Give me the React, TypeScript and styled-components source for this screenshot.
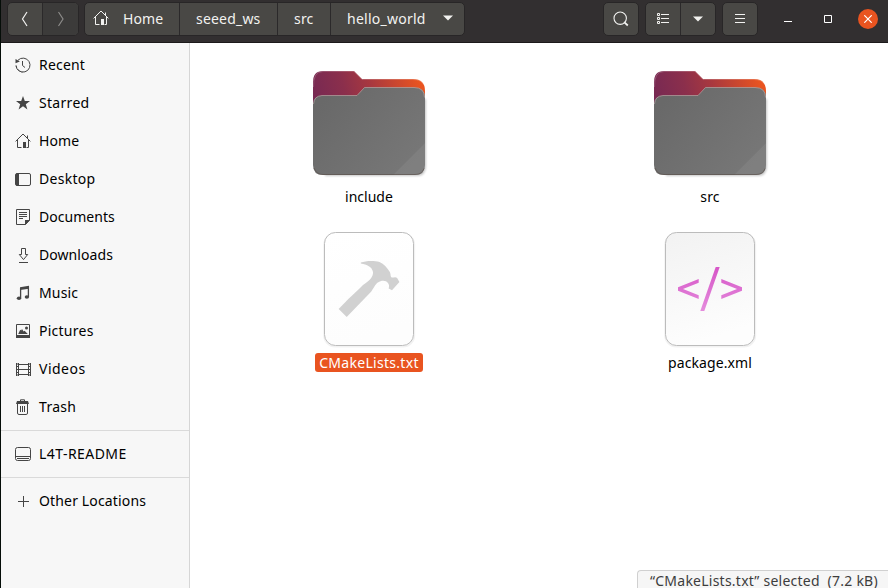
import React from 'react';
import styled, { createGlobalStyle, css } from 'styled-components';

const GlobalStyle = createGlobalStyle`
  *, *::before, *::after { box-sizing: border-box; }
  html, body { margin: 0; padding: 0; overflow: hidden; }
  body { font-family: "Noto Sans", "Open Sans", sans-serif; font-size: 14px; color: #000; }
  button { font: inherit; padding: 0; margin: 0; color: inherit; }
  svg { display: block; flex: none; }
`;

const Window = styled.div`
  position: relative;
  display: flex;
  flex-direction: column;
  width: 888px;
  height: 588px;
  overflow: hidden;
  background: #fff;
  border-left: 1px solid #050d08;
`;

const HeaderBar = styled.header`
  display: flex;
  align-items: flex-start;
  flex: none;
  height: 43px;
  padding: 2px 10px 0 6px;
  background: #322f30;
  border-bottom: 1px solid #1c1a1b;
  color: #f2f2f0;
`;

const ButtonGroup = styled.div<{ $gap?: number }>`
  display: flex;
  flex: none;
  height: 34px;
  margin-left: ${(p) => p.$gap ?? 0}px;
  border: 1px solid #282627;
  border-radius: 5px;
  overflow: hidden;
  background: #494845;
`;

const BarButton = styled.button<{ $width: number; $dim?: boolean }>`
  display: flex;
  align-items: center;
  justify-content: center;
  width: ${(p) => p.$width}px;
  border: 0;
  background: ${(p) => (p.$dim ? '#3c3b3a' : 'transparent')};
  color: ${(p) => (p.$dim ? '#8b8a88' : '#f2f2f0')};
  & + & { border-left: 1px solid #2b292a; }
`;

const Text = styled.span<{ $track?: number }>`
  white-space: pre;
  letter-spacing: ${(p) => p.$track ?? 0}px;
`;

const Crumb = styled(BarButton)<{ $pad: number }>`
  justify-content: flex-start;
  padding: 0 0 2px ${(p) => p.$pad}px;
`;

const Spacer = styled.div<{ $size: number }>`
  flex: none;
  width: ${(p) => p.$size}px;
`;

const WindowControls = styled.div`
  display: flex;
  align-items: center;
  height: 34px;
  margin-left: auto;
  gap: 20px;
`;

const ControlButton = styled.button<{ $close?: boolean }>`
  display: flex;
  align-items: center;
  justify-content: center;
  width: 20px;
  height: 20px;
  border: 0;
  border-radius: 50%;
  color: #fff;
  background: ${(p) => (p.$close ? '#e95420' : 'transparent')};
`;

const Body = styled.div`
  display: flex;
  flex: 1;
  min-height: 0;
`;

const Sidebar = styled.nav`
  flex: none;
  width: 189px;
  padding-top: 3px;
  background: #f7f7f7;
  border-right: 1px solid #d6d6d6;
`;

const Place = styled.div`
  display: flex;
  align-items: center;
  height: 38px;
  padding: 0 0 0 14px;
  gap: 8px;
  color: #454545;
  ${Text} { color: #000; line-height: 18px; margin-bottom: 1px; }
`;

const Divider = styled.div`
  height: 1px;
  margin: 4px 0;
  background: #dadada;
`;

const FileGrid = styled.main`
  display: grid;
  grid-template-columns: 340px 340px;
  grid-auto-rows: 147px;
  gap: 19px 1px;
  align-content: start;
  padding: 16px 8px 0 9px;
`;

const FileItem = styled.div`
  display: flex;
  flex-direction: column;
  align-items: center;
`;

const FileName = styled.div<{ $selected?: boolean }>`
  height: 19px;
  padding: 0 4px;
  line-height: 20px;
  border-radius: 3px;
  ${(p) => p.$selected && css`background: #e95420; color: #fff;`}
`;

const StatusBar = styled.div`
  position: absolute;
  right: 0;
  bottom: 0;
  width: 251px;
  height: 18px;
  padding-left: 12px;
  line-height: 20px;
  border: 1px solid #d0d0d0;
  border-width: 1px 0 0 1px;
  border-top-left-radius: 4px;
  background: #f6f6f6;
  color: #3d3d3d;
`;

const iconProps = { width: 16, height: 16, viewBox: '0 0 16 16', fill: 'none', stroke: 'currentColor', strokeWidth: 1 };

const HomeIcon = () => (
  <svg {...iconProps}>
    <path d="M.6 8.4 8 1l7.4 7.4M2.5 7v7.5h4M13.5 6.8v7.7h-2M12.5 2.5v3" />
    <path d="M8 9h3v6H8z" fill="currentColor" stroke="none" />
  </svg>
);

const icons: Record<string, React.ReactNode> = {
  recent: (
    <svg {...iconProps}>
      <path d="M3 3.2A7 7 0 1 1 1 8.3" />
      <path d="M1.2 9.2A7 7 0 0 0 8 15" strokeDasharray="2 1" />
      <path d="M.5 2v4.2l4.4-1.6z" fill="currentColor" stroke="none" />
      <path d="M7.5 4v4.5l2.5 2" />
    </svg>
  ),
  starred: (
    <svg {...iconProps}>
      <path fill="currentColor" stroke="none" d="m8 1 1.8 5H15l-4.2 3.2 1.6 5.3L8 11.3l-4.4 3.2 1.6-5.3L1 6h5.2z" />
    </svg>
  ),
  home: <HomeIcon />,
  desktop: (
    <svg {...iconProps}>
      <rect x=".5" y="2.5" width="15" height="12" rx="1.5" />
      <path d="M1 2.5h3v12H1z" fill="currentColor" stroke="none" />
    </svg>
  ),
  documents: (
    <svg {...iconProps}>
      <path d="M1.5.5h13v10.8l-4 4.2h-9z" />
      <path d="M4 3.5h8M4 5.5h8M4 7.5h8M4 9.5h4" />
      <path d="M10 11h5l-5 5z" fill="currentColor" stroke="none" />
    </svg>
  ),
  downloads: (
    <svg {...iconProps}>
      <path d="M6.5 1.5h4v6h2.2L8.5 12.6 4.3 7.5h2.2zM4 15.5h9" />
    </svg>
  ),
  music: (
    <svg {...iconProps}>
      <path d="M5.6 13V3M13.4 12V1.5" strokeWidth="1.3" />
      <path d="M5 2.2 14 .8v3L5 5.1z" fill="currentColor" stroke="none" />
      <ellipse cx="4" cy="13.2" rx="2.2" ry="1.8" fill="currentColor" stroke="none" />
      <ellipse cx="11.9" cy="12" rx="2.2" ry="1.8" fill="currentColor" stroke="none" />
    </svg>
  ),
  pictures: (
    <svg {...iconProps}>
      <path d="M1.5 1.5h13v12h-13z" />
      <path d="M1 12h14v3H1z" fill="currentColor" stroke="none" />
      <path d="m3.2 11 2-4.2 1 .8L7 6l1.6 2.5 1-.7L12.8 11z" fill="currentColor" stroke="none" />
      <circle cx="11.5" cy="5" r="1.5" fill="currentColor" stroke="none" />
    </svg>
  ),
  videos: (
    <svg {...iconProps}>
      <path d="M3.5 2v13M13.5 2v13M3 3.5h11M3 8.5h11M3 13.5h11" />
      <path d="M1.5 2v13M15.5 2v13" />
      <path d="M1 3h3M1 5.5h3M1 8.5h3M1 11.5h3M1 14h3M13 3h3M13 5.5h3M13 8.5h3M13 11.5h3M13 14h3" />
    </svg>
  ),
  trash: (
    <svg {...iconProps}>
      <path d="M2.5 5v9q0 1.5 1.5 1.5h7.2q1.3 0 1.3-1.5V5M5.5 7v6M7.5 7v6M9.5 7v6M5.5 2V.8h4V2" />
      <path d="M2 2h11l1 3H1z" fill="currentColor" stroke="none" />
    </svg>
  ),
  drive: (
    <svg {...iconProps}>
      <rect x=".5" y="1.5" width="15" height="13" rx="2" />
      <path d="M1 10.5h14M2 12.5h12" />
    </svg>
  ),
  plus: (
    <svg {...iconProps}>
      <path d="M8.5 3v11M3 8.5h11" />
    </svg>
  ),
};

const FolderIcon = ({ id }: { id: string }) => (
  <svg width="128" height="128" viewBox="0 0 128 128">
    <defs>
      <linearGradient id={`${id}-back`} x1="8" y1="38" x2="112" y2="12" gradientUnits="userSpaceOnUse">
        <stop offset="0" stopColor="#772953" />
        <stop offset=".3" stopColor="#8b2f4c" />
        <stop offset=".55" stopColor="#a8383f" />
        <stop offset="1" stopColor="#e95420" />
      </linearGradient>
      <linearGradient id={`${id}-front`} x1="20" y1="40" x2="110" y2="115" gradientUnits="userSpaceOnUse">
        <stop offset="0" stopColor="#696969" />
        <stop offset="1" stopColor="#787878" />
      </linearGradient>
      <filter id={`${id}-soft`} x="-10%" y="-10%" width="120%" height="120%">
        <feGaussianBlur stdDeviation="1.3" />
      </filter>
    </defs>
    <path d="M12 40h109v67q0 10-9 10H20z" fill="#000" opacity=".22" filter={`url(#${id}-soft)`} />
    <path d="M8 23Q8 12 18 12h31l8 8h51q12 0 12 12v70H8z" fill={`url(#${id}-back)`} />
    <path d="M8.5 28Q8 12.5 18 12.5h31l8 8h51q8 0 10.5 5" fill="none" stroke="#fff" opacity=".18" />
    <path d="M8 45q0-8 9-8.500h35l7.500-8H109q11 0 11 10V106q0 10-10 10H18Q8 116 8 106z" fill={`url(#${id}-front)`} />
    <path d="M120 84v22q0 10-10 10H88z" fill="#fff" opacity=".06" />
    <path d="M8.500 45q.5-8 8.500-8.500h35l7.500-8H109q10.500 0 10.500 10" fill="none" stroke="#b8a9a6" strokeWidth=".9" opacity=".75" />
    <path d="M9 109q2.500 6.500 9 6.500h92q7 0 9-6" fill="none" stroke="#5a4e48" strokeWidth="1" opacity=".6" />
  </svg>
);

const Sheet = ({ id, top, children }: { id: string; top: string; children: React.ReactNode }) => (
  <svg width="128" height="128" viewBox="0 0 128 128">
    <defs>
      <linearGradient id={id} x1="0" y1="0" x2=".25" y2="1">
        <stop offset="0" stopColor={top} />
        <stop offset="1" stopColor="#fdfdfd" />
      </linearGradient>
      <linearGradient id={`${id}-pink`} x1="0" y1="45" x2="0" y2="85" gradientUnits="userSpaceOnUse">
        <stop offset="0" stopColor="#d758c8" />
        <stop offset="1" stopColor="#e48bdc" />
      </linearGradient>
    </defs>
    <rect x="19.2" y="8.7" width="90" height="112.800" rx="11" fill="none" stroke="#000" strokeWidth="2" opacity=".05" />
    <rect x="19.5" y="7.5" width="89" height="113" rx="11" fill={`url(#${id})`} stroke="#bcbcbc" />
    {children}
  </svg>
);

const HammerFile = () => (
  <Sheet id="sheet-cmake" top="#fff">
    <path
      fill="#d1d1d1"
      d="M55.800 37.600C61 35.600 69 35.500 74.500 37 79 38.800 82 43 84.500 46.500 86.300 49 84.800 51.700 87 52.600 89 52.600 91 51.700 92.300 53.200L94.400 57 87 65.300 83.700 63.400C85.500 58 80.500 54.500 75.500 56.300 70.500 57.800 69.500 62 66.300 66.500L41.700 92 33.700 84C43 74 50 68 58 60 64 56 68.500 52 68 47 67 42 62 39.500 55.800 38.600z"
    />
  </Sheet>
);

const CodeFile = () => (
  <Sheet id="sheet-xml" top="#f2f2f2">
    <g fill="url(#sheet-xml-pink)">
      <path d="M52.700 54v3.700L37 64l15.700 6.300V74L32 65.700v-3.400z" />
      <path d="M75.300 54v3.700L91 64l-15.700 6.300V74L96 65.700v-3.400z" />
      <path d="M69.700 42h4L58.300 86h-4z" />
    </g>
  </Sheet>
);

type PlaceEntry = { icon: string; name: string; track?: number };

const places: PlaceEntry[] = [
  { icon: 'recent', name: 'Recent', track: 0.2 },
  { icon: 'starred', name: 'Starred', track: 0.3 },
  { icon: 'home', name: 'Home', track: 0.1 },
  { icon: 'desktop', name: 'Desktop', track: 0.3 },
  { icon: 'documents', name: 'Documents', track: 0.03 },
  { icon: 'downloads', name: 'Downloads', track: 0.07 },
  { icon: 'music', name: 'Music', track: 0.15 },
  { icon: 'pictures', name: 'Pictures', track: 0.25 },
  { icon: 'videos', name: 'Videos', track: 0.5 },
  { icon: 'trash', name: 'Trash', track: 0.3 },
];

const CaretIcon = () => (
  <svg width="10" height="6" viewBox="0 0 10 6">
    <path d="M0 .5h10L5 5.5z" fill="currentColor" />
  </svg>
);

const PlaceRow = ({ icon, name, track }: PlaceEntry) => (
  <Place>
    {icons[icon]}
    <Text $track={track}>{name}</Text>
  </Place>
);

export default function App() {
  return (
    <>
      <GlobalStyle />
      <Window>
        <HeaderBar>
          <ButtonGroup>
            <BarButton $width={34}>
              <svg width="8" height="16" viewBox="0 0 8 16"><path d="M6 1 1.500 8 6 15" fill="none" stroke="currentColor" strokeWidth="1.2" /></svg>
            </BarButton>
            <BarButton $width={36} $dim>
              <svg width="8" height="16" viewBox="0 0 8 16"><path d="M1.500 1 6 8l-4.500 7" fill="none" stroke="currentColor" strokeWidth="1.2" /></svg>
            </BarButton>
          </ButtonGroup>
          <ButtonGroup $gap={5}>
            <Crumb $width={94} $pad={8}>
              <HomeIcon />
              <Spacer $size={14} />
              <Text $track={0.1}>Home</Text>
            </Crumb>
            <Crumb $width={98} $pad={16}><Text $track={0.2}>seeed_ws</Text></Crumb>
            <Crumb $width={53} $pad={16}><Text $track={0.2}>src</Text></Crumb>
            <Crumb $width={134} $pad={16}>
              <Text $track={0.25}>hello_world</Text>
              <Spacer $size={17} />
              <CaretIcon />
            </Crumb>
          </ButtonGroup>
          <ButtonGroup $gap={138}>
            <BarButton $width={34}>
              <svg {...iconProps}>
                <circle cx="7.2" cy="7.2" r="6.2" strokeWidth="1.100" />
                <path d="m11.200 11.200 3.600 3.300" strokeWidth="1.800" />
              </svg>
            </BarButton>
          </ButtonGroup>
          <ButtonGroup $gap={6}>
            <BarButton $width={34}>
              <svg width="14" height="12" viewBox="0 0 14 12" fill="none" stroke="currentColor">
                <path d="M1.500.5h2v2h-2zM1.500 4.500h2v2h-2zM1.500 8.500h2v2h-2zM5 1.500h8M5 5.500h8M5 9.500h8" />
              </svg>
            </BarButton>
            <BarButton $width={35}><CaretIcon /></BarButton>
          </ButtonGroup>
          <ButtonGroup $gap={6}>
            <BarButton $width={34}>
              <svg width="10" height="10" viewBox="0 0 10 10"><path d="M0 .5h10M0 4.500h10M0 8.500h10" stroke="currentColor" /></svg>
            </BarButton>
          </ButtonGroup>
          <WindowControls>
            <ControlButton>
              <svg width="8" height="8" viewBox="0 0 8 8"><path d="M0 6.500h8" stroke="currentColor" /></svg>
            </ControlButton>
            <ControlButton>
              <svg width="8" height="8" viewBox="0 0 8 8"><path d="M.5.500h7v7h-7z" fill="none" stroke="currentColor" /></svg>
            </ControlButton>
            <ControlButton $close>
              <svg width="8" height="8" viewBox="0 0 8 8"><path d="m.3.300 7.400 7.400m0-7.400L.3 7.700" stroke="currentColor" strokeWidth="1.2" /></svg>
            </ControlButton>
          </WindowControls>
        </HeaderBar>
        <Body>
          <Sidebar>
            {places.map((p) => <PlaceRow key={p.name} {...p} />)}
            <Divider />
            <PlaceRow icon="drive" name="L4T-README" track={0.45} />
            <Divider />
            <PlaceRow icon="plus" name="Other Locations" track={0.15} />
          </Sidebar>
          <FileGrid>
            <FileItem><FolderIcon id="folder-include" /><FileName><Text>include</Text></FileName></FileItem>
            <FileItem><FolderIcon id="folder-src" /><FileName><Text $track={0.2}>src</Text></FileName></FileItem>
            <FileItem><HammerFile /><FileName $selected><Text $track={0.29}>CMakeLists.txt</Text></FileName></FileItem>
            <FileItem><CodeFile /><FileName><Text $track={0.1}>package.xml</Text></FileName></FileItem>
          </FileGrid>
        </Body>
        <StatusBar><Text $track={0.24}>“CMakeLists.txt” selected  (7.2 kB)</Text></StatusBar>
      </Window>
    </>
  );
}
